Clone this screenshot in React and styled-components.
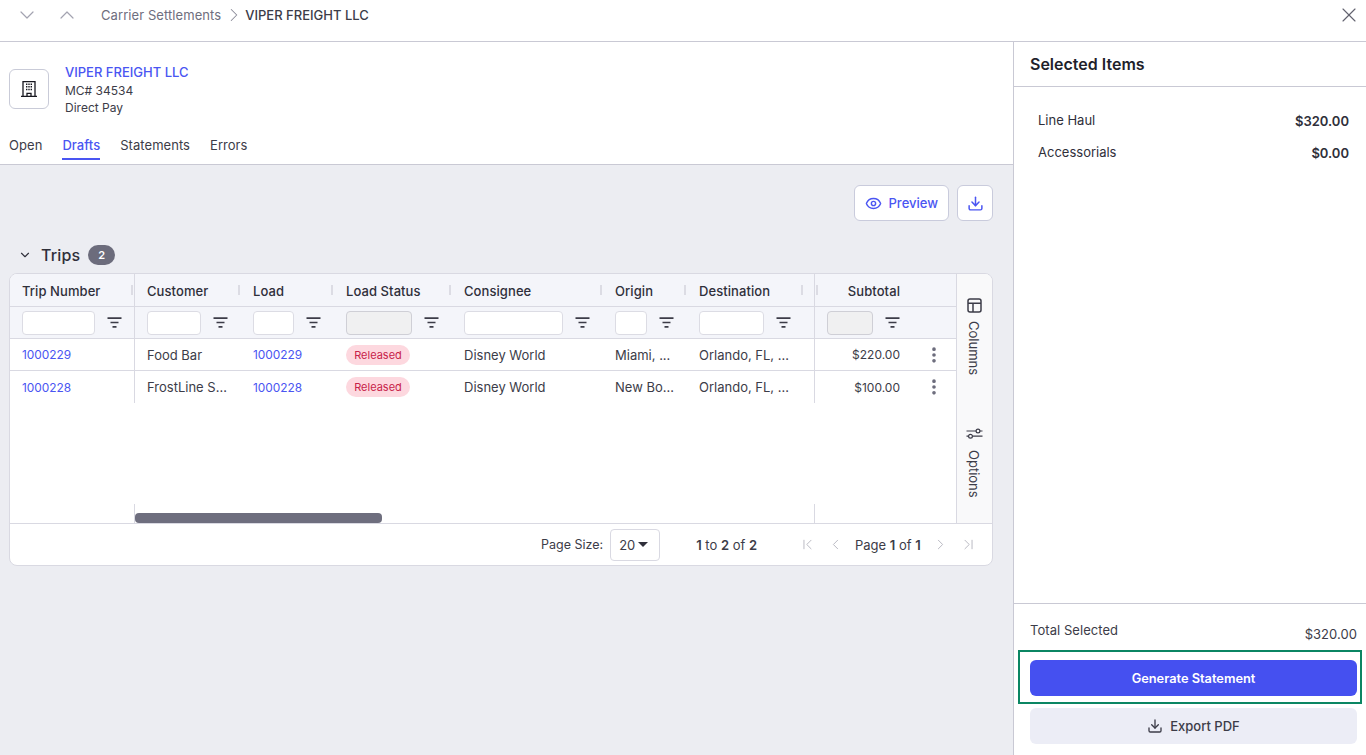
import React from 'react';
import styled, { createGlobalStyle } from 'styled-components';
import {
  X,
  ChevronDown,
  ChevronUp,
  ChevronRight,
  ChevronLeft,
  ChevronFirst,
  ChevronLast,
  Eye,
  Download,
  EllipsisVertical,
} from 'lucide-react';

const GlobalStyle = createGlobalStyle`
  html, body { margin: 0; height: 100%; }
  body { font-family: Inter, "Liberation Sans", sans-serif; color: #2f2f3a; background: #fff; }
  #root { height: 100%; }
  * { box-sizing: border-box; }
`;

const Page = styled.div`
  height: 755px;
  display: flex;
  flex-direction: column;
  overflow: hidden;
`;

const TopBar = styled.div`
  height: 42px;
  flex: none;
  display: flex;
  align-items: flex-start;
  padding: 6px 5px 0 15px;
  border-bottom: 1px solid #c9c9d4;
`;

const NavIcons = styled.div`
  display: flex;
  gap: 16px;
  color: #a3a3b0;
  margin: -3px 22px 0 0;
`;

const Crumbs = styled.div`
  display: flex;
  align-items: center;
  height: 18px;
  font-size: 13px;
  letter-spacing: 0.006em;
  color: #6e6e7e;
`;

const CrumbSep = styled.span`
  display: flex;
  margin: 0 0 0 2px;
  color: #8a8a98;
`;

const CrumbCurrent = styled.span`
  color: #3c3c48;
  font-weight: 500;
  letter-spacing: 0;
`;

const CloseBtn = styled.div`
  margin: -3px 0 0 auto;
  color: #62626f;
  display: flex;
`;

const Body = styled.div`
  flex: 1;
  display: flex;
  min-height: 0;
`;

const Main = styled.main`
  width: 1013px;
  flex: none;
  display: flex;
  flex-direction: column;
  background: #ecedf2;
`;

const DetailHead = styled.div`
  height: 123px;
  flex: none;
  background: #fff;
  border-bottom: 1px solid #c9c9d4;
  padding: 0 9px;
`;

const Company = styled.div`
  display: flex;
  gap: 16px;
  padding-top: 22px;
`;

const CompanyIcon = styled.div`
  width: 40px;
  height: 40px;
  margin-top: 5px;
  border: 1px solid #c9cbd8;
  border-radius: 6px;
  display: flex;
  align-items: center;
  justify-content: center;
  color: #17171f;
`;

const CompanyInfo = styled.div`
  display: flex;
  flex-direction: column;
`;

const CompanyName = styled.div`
  font-size: 13px;
  line-height: 17px;
  margin-bottom: 1px;
  color: #4a55f2;
  font-weight: 500;
`;

const CompanyLine = styled.div`
  font-size: 12px;
  line-height: 17px;
  color: #3c3c48;
`;

const Tabs = styled.div`
  display: flex;
  gap: 20px;
  margin-top: 13px;
`;

const Tab = styled.div`
  font-size: 13px;
  letter-spacing: 0.004em;
  line-height: 16px;
  height: 31px;
  padding-top: 8px;
  color: ${(p) => (p.$active ? '#4a55f2' : '#3c3c48')};
  font-weight: ${(p) => (p.$active ? 500 : 400)};
  border-bottom: 2px solid ${(p) => (p.$active ? '#4a55f2' : 'transparent')};
`;

const Content = styled.div`
  flex: 1;
  padding: 20px 20px 0 9px;
  display: flex;
  flex-direction: column;
`;

const Actions = styled.div`
  display: flex;
  justify-content: flex-end;
  gap: 8px;
`;

const OutlineBtn = styled.button`
  height: 36px;
  min-width: 36px;
  padding: ${(p) => (p.$icon ? '0' : '0 10px')};
  display: flex;
  align-items: center;
  justify-content: center;
  gap: 7px;
  background: #fff;
  border: 1px solid #c9cbdc;
  border-radius: 6px;
  color: #4a55f2;
  font-family: inherit;
  font-size: 13px;
  font-weight: 500;
`;

const SectionHead = styled.div`
  display: flex;
  align-items: center;
  margin-top: 24px;
  height: 20px;
  padding-left: 9px;
`;

const SectionTitle = styled.div`
  font-size: 16px;
  letter-spacing: 0.01em;
  font-weight: 500;
  color: #2f2f3a;
  margin-left: 9px;
`;

const Count = styled.div`
  margin-left: 8px;
  width: 27px;
  height: 20px;
  border-radius: 10px;
  background: #6c6c7c;
  color: #fff;
  font-size: 11px;
  font-weight: 600;
  display: flex;
  align-items: center;
  justify-content: center;
`;

const Card = styled.div`
  margin-top: 8px;
  height: 293px;
  width: 984px;
  background: #fff;
  border: 1px solid #d9d9e2;
  border-radius: 8px;
  overflow: hidden;
  display: flex;
  flex-direction: column;
`;

const CardMain = styled.div`
  flex: 1;
  display: flex;
  min-height: 0;
`;

const Grid = styled.div`
  width: 946px;
  flex: none;
  display: flex;
  flex-direction: column;
`;

const Row = styled.div`
  display: flex;
  height: ${(p) => p.$h}px;
  flex: none;
  background: ${(p) => p.$bg || '#fff'};
  border-bottom: ${(p) => (p.$last ? 'none' : '1px solid #d9d9e2')};
`;

const HeadCell = styled.div`
  position: relative;
  width: ${(p) => p.$w}px;
  flex: none;
  display: flex;
  align-items: center;
  justify-content: ${(p) => (p.$right ? 'flex-end' : 'flex-start')};
  padding: 2px 12px 0;
  font-size: 13px;
  letter-spacing: 0.006em;
  font-weight: 500;
  color: #2f2f3a;
  border-right: ${(p) => (p.$divider ? '1px solid #d9d9e2' : 'none')};
  &::after {
    content: ${(p) => (p.$handle !== undefined ? "''" : 'none')};
    position: absolute;
    right: ${(p) => p.$handle}px;
    top: 11px;
    width: 2px;
    height: 10px;
    background: #dcdce4;
  }
  &::before {
    content: ${(p) => (p.$lead ? "''" : 'none')};
    position: absolute;
    left: 1px;
    top: 11px;
    width: 2px;
    height: 10px;
    background: #dcdce4;
  }
`;

const FilterCell = styled.div`
  width: ${(p) => p.$w}px;
  flex: none;
  display: flex;
  align-items: center;
  gap: 12px;
  padding: 0 ${(p) => p.$pr}px 0 12px;
  color: #3c3c48;
  border-right: ${(p) => (p.$divider ? '1px solid #d9d9e2' : 'none')};
`;

const FilterInput = styled.div`
  flex: 1;
  min-width: 0;
  height: 24px;
  border-radius: 4px;
  border: 1px solid ${(p) => (p.$disabled ? '#cfcfd6' : '#dcdce4')};
  background: ${(p) => (p.$disabled ? '#f0f0f1' : '#fff')};
`;

const FilterGlyph = styled.svg`
  flex: none;
  width: 15px;
  height: 15px;
`;

const Cell = styled.div`
  width: ${(p) => p.$w}px;
  flex: none;
  display: flex;
  align-items: center;
  justify-content: ${(p) => (p.$right ? 'flex-end' : 'flex-start')};
  padding: 0 12px;
  font-size: ${(p) => (p.$right ? '12px' : '13px')};
  color: #3c3c48;
  white-space: nowrap;
  border-right: ${(p) => (p.$divider ? '1px solid #d9d9e2' : 'none')};
`;

const LinkText = styled.span`
  font-size: 11.9px;
  color: #4a55f2;
`;

const Pill = styled.span`
  width: 64px;
  height: 20px;
  border-radius: 10px;
  background: #fdd8df;
  color: #c8234a;
  font-size: 11px;
  display: flex;
  align-items: center;
  justify-content: center;
`;

const Spacer = styled.div`
  flex: 1;
`;

const ScrollRow = styled.div`
  height: 19px;
  flex: none;
  display: flex;
`;

const ScrollLeft = styled.div`
  width: 125px;
  flex: none;
  border-right: 1px solid #d9d9e2;
`;

const ScrollMid = styled.div`
  width: 680px;
  flex: none;
  display: flex;
  align-items: flex-end;
  border-right: 1px solid #d9d9e2;
`;

const Thumb = styled.div`
  width: 247px;
  height: 10px;
  border-radius: 4px;
  background: #6e6e7e;
`;

const SideBar = styled.div`
  flex: 1;
  background: #f9f9fa;
  border-left: 1px solid #d9d9e2;
  display: flex;
  flex-direction: column;
  align-items: center;
  padding: 24px 1px 0 0;
  gap: 53px;
  color: #3c3c48;
`;

const SideItem = styled.div`
  display: flex;
  flex-direction: column;
  align-items: center;
  gap: ${(p) => p.$gap}px;
`;

const SideLabel = styled.span`
  writing-mode: vertical-rl;
  font-size: 13px;
  line-height: 16px;
`;

const Pager = styled.div`
  height: 42px;
  flex: none;
  border-top: 1px solid #d9d9e2;
  display: flex;
  align-items: center;
  font-size: 12.5px;
  color: #3c3c48;
  padding-left: 531px;
`;

const SizeSelect = styled.div`
  width: 50px;
  height: 32px;
  margin-left: 7px;
  border: 1px solid #d9d9e2;
  border-radius: 4px;
  display: flex;
  align-items: center;
  padding-left: 8px;
  gap: 3px;
  font-size: 13px;
`;

const Caret = styled.span`
  width: 0;
  height: 0;
  border-left: 5px solid transparent;
  border-right: 5px solid transparent;
  border-top: 5px solid #2f2f3a;
`;

const RowCount = styled.div`
  margin-left: 36px;
  font-size: 13px;
`;

const PageNav = styled.div`
  margin-left: 36px;
  display: flex;
  align-items: center;
  color: #b4b4be;
`;

const PageBtn = styled.span`
  width: 28px;
  display: flex;
  justify-content: center;
`;

const PageText = styled.span`
  color: #3c3c48;
  font-size: 13px;
  margin: 0 6px;
`;

const Strong = styled.b`
  font-weight: 600;
`;

const Aside = styled.aside`
  width: 353px;
  flex: none;
  border-left: 1px solid #c9c9d4;
  display: flex;
  flex-direction: column;
`;

const AsideHead = styled.div`
  height: 45px;
  flex: none;
  border-bottom: 1px solid #c9c9d4;
  padding: 0 16px;
  display: flex;
  align-items: center;
  font-size: 16px;
  font-weight: 600;
  color: #1f1f2b;
`;

const AsideList = styled.div`
  flex: 1;
  padding: 25px 17px 0 24px;
  display: flex;
  flex-direction: column;
  gap: 16px;
`;

const AmountRow = styled.div`
  display: flex;
  justify-content: space-between;
  align-items: center;
  height: 16px;
  font-size: 13px;
  color: #2f2f3a;
`;

const Amount = styled.span`
  font-weight: 600;
  position: relative;
  top: 1px;
`;

const AsideFoot = styled.div`
  height: 152px;
  flex: none;
  border-top: 1px solid #c9c9d4;
  padding: 18px 9px 0 16px;
`;

const TotalRow = styled.div`
  display: flex;
  justify-content: space-between;
  font-size: 13px;
  letter-spacing: 0.004em;
  line-height: 16px;
  color: #3c3c48;
  height: 28px;
`;

const TotalAmount = styled.span`
  margin-top: 4px;
`;

const Highlight = styled.div`
  width: 344px;
  height: 54px;
  margin-left: -12px;
  padding: 8px 3px 6px 10px;
  border: 2px solid #0b8663;
`;

const PrimaryBtn = styled.button`
  width: 327px;
  height: 36px;
  border: none;
  border-radius: 6px;
  background: #4550f0;
  color: #fff;
  font-family: inherit;
  font-size: 12.8px;
  font-weight: 600;
`;

const SecondaryBtn = styled.button`
  width: 327px;
  height: 36px;
  margin-top: 4px;
  border: none;
  border-radius: 6px;
  background: #ecedf6;
  color: #3c3c48;
  font-family: inherit;
  font-size: 13px;
  font-weight: 500;
  display: flex;
  align-items: center;
  justify-content: center;
  gap: 7px;
`;

const BuildingIcon = () => (
  <svg width="18" height="18" viewBox="0 0 18 18" fill="none" stroke="currentColor" strokeWidth="1.3">
    <path d="M1 16.4h16M3 16.4V1.6h12v14.8M7 16.4v-3h4v3" />
    <path d="M6 4.2h1.4M8.3 4.2h1.4M10.6 4.2H12M6 6.8h1.4M8.3 6.8h1.4M10.6 6.8H12M6 9.4h1.4M8.3 9.4h1.4M10.6 9.4H12" strokeWidth="1.5" />
  </svg>
);

const FilterIcon = () => (
  <FilterGlyph viewBox="0 0 15 15" fill="none" stroke="currentColor" strokeWidth="1.7">
    <path d="M0.5 3.2h14M3.5 7.5h8M5.5 11.8h4" />
  </FilterGlyph>
);

const ColumnsIcon = () => (
  <svg width="15" height="15" viewBox="0 0 15 15" fill="none" stroke="currentColor" strokeWidth="1.5">
    <rect x="1" y="1" width="13" height="13" rx="2" />
    <path d="M1 5.2h13M6 5.2V14" />
  </svg>
);

const OptionsIcon = () => (
  <svg width="17" height="11" viewBox="0 0 17 11" fill="none" stroke="currentColor" strokeWidth="1.2">
    <path d="M0.5 3h9.5M14 3h2.5M0.5 8.2H2.5M6.5 8.2h10" />
    <circle cx="12" cy="3" r="1.9" />
    <circle cx="4.5" cy="8.2" r="1.9" />
  </svg>
);

const columns = [
  { key: 'trip', title: 'Trip Number', w: 125, divider: true, handle: 1, pr: 12 },
  { key: 'customer', title: 'Customer', w: 106, handle: 1, pr: 13 },
  { key: 'load', title: 'Load', w: 93, handle: 1, pr: 13 },
  { key: 'status', title: 'Load Status', w: 118, handle: 1, pr: 13, disabled: true },
  { key: 'consignee', title: 'Consignee', w: 151, handle: 1, pr: 13 },
  { key: 'origin', title: 'Origin', w: 84, handle: 1, pr: 13 },
  { key: 'destination', title: 'Destination', w: 128, handle: 11, pr: 23, divider: true },
  { key: 'subtotal', title: 'Subtotal', w: 97, right: true, disabled: true, lead: true, pr: 12 },
];

const trips = [
  { trip: '1000229', customer: 'Food Bar', origin: 'Miami, ...', subtotal: '$220.00' },
  { trip: '1000228', customer: 'FrostLine S…', origin: 'New Bo…', subtotal: '$100.00' },
];

function renderCell(col, row) {
  if (col.key === 'trip' || col.key === 'load') return <LinkText>{row.trip}</LinkText>;
  if (col.key === 'status') return <Pill>Released</Pill>;
  if (col.key === 'consignee') return 'Disney World';
  if (col.key === 'destination') return 'Orlando, FL, …';
  return row[col.key];
}

export default function App() {
  return (
    <Page>
      <GlobalStyle />
      <TopBar>
        <NavIcons>
          <ChevronDown size={24} strokeWidth={1.2} />
          <ChevronUp size={24} strokeWidth={1.2} />
        </NavIcons>
        <Crumbs>
          Carrier Settlements
          <CrumbSep>
            <ChevronRight size={22} strokeWidth={1.1} />
          </CrumbSep>
          <CrumbCurrent>VIPER FREIGHT LLC</CrumbCurrent>
        </Crumbs>
        <CloseBtn>
          <X size={24} strokeWidth={1.15} />
        </CloseBtn>
      </TopBar>
      <Body>
        <Main>
          <DetailHead>
            <Company>
              <CompanyIcon>
                <BuildingIcon />
              </CompanyIcon>
              <CompanyInfo>
                <CompanyName>VIPER FREIGHT LLC</CompanyName>
                <CompanyLine>MC# 34534</CompanyLine>
                <CompanyLine>Direct Pay</CompanyLine>
              </CompanyInfo>
            </Company>
            <Tabs>
              <Tab>Open</Tab>
              <Tab $active>Drafts</Tab>
              <Tab>Statements</Tab>
              <Tab>Errors</Tab>
            </Tabs>
          </DetailHead>
          <Content>
            <Actions>
              <OutlineBtn>
                <Eye size={17} strokeWidth={2} />
                Preview
              </OutlineBtn>
              <OutlineBtn $icon aria-label="Download">
                <Download size={17} strokeWidth={2.1} />
              </OutlineBtn>
            </Actions>
            <SectionHead>
              <ChevronDown size={14} strokeWidth={2} />
              <SectionTitle>Trips</SectionTitle>
              <Count>2</Count>
            </SectionHead>
            <Card>
              <CardMain>
                <Grid>
                  <Row $h={33} $bg="#f4f5fa">
                    {columns.map((c) => (
                      <HeadCell key={c.key} $w={c.w} $right={c.right} $divider={c.divider} $handle={c.handle} $lead={c.lead}>
                        {c.title}
                      </HeadCell>
                    ))}
                  </Row>
                  <Row $h={32} $bg="#f4f5fa">
                    {columns.map((c) => (
                      <FilterCell key={c.key} $w={c.w} $pr={c.pr} $divider={c.divider}>
                        <FilterInput $disabled={c.disabled} />
                        <FilterIcon />
                      </FilterCell>
                    ))}
                  </Row>
                  {trips.map((t, i) => (
                    <Row key={t.trip} $h={32} $last={i === trips.length - 1}>
                      {columns.map((c) => (
                        <Cell key={c.key} $w={c.w} $right={c.right} $divider={c.divider}>
                          {renderCell(c, t)}
                        </Cell>
                      ))}
                      <Cell $w={44}>
                        <EllipsisVertical size={20} strokeWidth={2.4} color="#6c6c7c" style={{ flex: 'none' }} />
                      </Cell>
                    </Row>
                  ))}
                  <Spacer />
                  <ScrollRow>
                    <ScrollLeft />
                    <ScrollMid>
                      <Thumb />
                    </ScrollMid>
                  </ScrollRow>
                </Grid>
                <SideBar>
                  <SideItem $gap={8}>
                    <ColumnsIcon />
                    <SideLabel>Columns</SideLabel>
                  </SideItem>
                  <SideItem $gap={11}>
                    <OptionsIcon />
                    <SideLabel>Options</SideLabel>
                  </SideItem>
                </SideBar>
              </CardMain>
              <Pager>
                Page Size:
                <SizeSelect>
                  20
                  <Caret />
                </SizeSelect>
                <RowCount>
                  <Strong>1</Strong> to <Strong>2</Strong> of <Strong>2</Strong>
                </RowCount>
                <PageNav>
                  <PageBtn>
                    <ChevronFirst size={17} strokeWidth={1.3} />
                  </PageBtn>
                  <PageBtn>
                    <ChevronLeft size={17} strokeWidth={1.3} />
                  </PageBtn>
                  <PageText>
                    Page <Strong>1</Strong> of <Strong>1</Strong>
                  </PageText>
                  <PageBtn>
                    <ChevronRight size={17} strokeWidth={1.3} />
                  </PageBtn>
                  <PageBtn>
                    <ChevronLast size={17} strokeWidth={1.3} />
                  </PageBtn>
                </PageNav>
              </Pager>
            </Card>
          </Content>
        </Main>
        <Aside>
          <AsideHead>Selected Items</AsideHead>
          <AsideList>
            <AmountRow>
              Line Haul
              <Amount>$320.00</Amount>
            </AmountRow>
            <AmountRow>
              Accessorials
              <Amount>$0.00</Amount>
            </AmountRow>
          </AsideList>
          <AsideFoot>
            <TotalRow>
              Total Selected
              <TotalAmount>$320.00</TotalAmount>
            </TotalRow>
            <Highlight>
              <PrimaryBtn>Generate Statement</PrimaryBtn>
            </Highlight>
            <SecondaryBtn>
              <Download size={16} strokeWidth={2} />
              Export PDF
            </SecondaryBtn>
          </AsideFoot>
        </Aside>
      </Body>
    </Page>
  );
}
